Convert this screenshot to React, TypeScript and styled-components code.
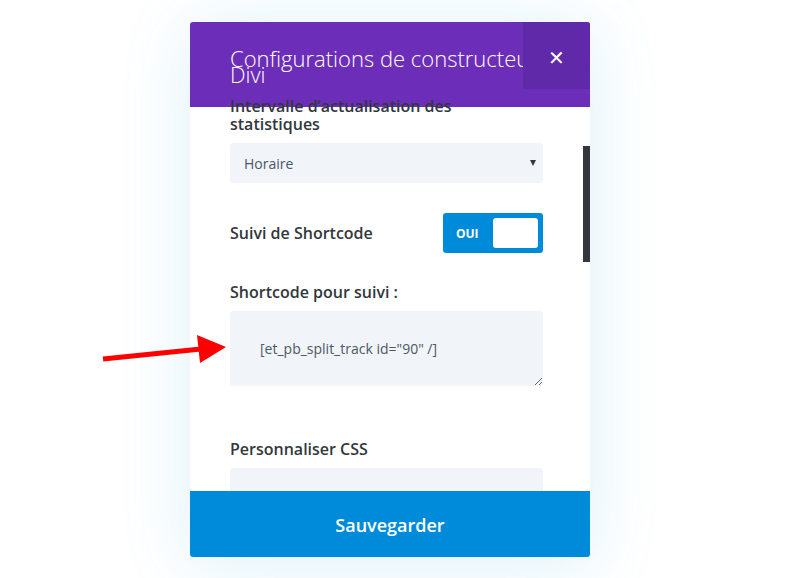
import React from 'react';
import styled, { createGlobalStyle } from 'styled-components';

const GlobalStyle = createGlobalStyle`
  html, body {
    margin: 0;
    padding: 0;
    background: #ffffff;
    font-family: "Open Sans", "Liberation Sans", sans-serif;
  }
`;

const Page = styled.div`
  position: relative;
  width: 786px;
  height: 578px;
  padding: 22px 0 0 190px;
  box-sizing: border-box;
  overflow: hidden;
`;

const Modal = styled.div`
  width: 400px;
  height: 535px;
  display: flex;
  flex-direction: column;
  background: #ffffff;
  border-radius: 3px;
  overflow: hidden;
  position: relative;
  box-shadow: 0 6px 70px rgba(40, 160, 220, 0.16);
`;

const Header = styled.div`
  position: relative;
  flex: 0 0 85px;
  background: #6c2eb9;
  padding: 28px 0 0 40px;
  box-sizing: border-box;
`;

const Title = styled.h2`
  margin: 0;
  width: 330px;
  font-size: 22px;
  font-weight: 300;
  line-height: 16px;
  color: #ffffff;
`;

const CloseButton = styled.button`
  position: absolute;
  top: 0;
  right: 0;
  width: 67px;
  height: 67px;
  border: none;
  background: #5f29a9;
  color: #ffffff;
  font-family: "DejaVu Sans", sans-serif;
  font-size: 20px;
  font-weight: 700;
  line-height: 1;
  padding: 4px 0 0 0;
  cursor: pointer;
`;

const Body = styled.div`
  position: relative;
  z-index: 1;
  flex: 1;
  margin-top: -10px;
  padding: 0 47px 0 40px;
  overflow: hidden;
`;

const Scrollbar = styled.div`
  position: absolute;
  right: 0;
  top: 49px;
  width: 7px;
  height: 116px;
  background: #35353d;
`;

const Field = styled.div<{ $gap?: number }>`
  margin-bottom: ${(p) => p.$gap ?? 30}px;
`;

const Label = styled.div`
  font-size: 16px;
  font-weight: 600;
  line-height: 18px;
  color: #32373c;
  margin-bottom: 10px;
`;

const Select = styled.div`
  position: relative;
  height: 40px;
  display: flex;
  align-items: center;
  padding-left: 14px;
  background: #f1f4f9;
  border-radius: 3px;
  font-size: 14px;
  color: #4c5866;

  &::after {
    content: '';
    position: absolute;
    right: 7px;
    top: 17px;
    border-left: 3px solid transparent;
    border-right: 3px solid transparent;
    border-top: 6px solid #32373c;
  }
`;

const ToggleRow = styled.div`
  display: flex;
  align-items: center;
  justify-content: space-between;
  margin-bottom: 30px;
`;

const RowLabel = styled(Label)`
  margin-bottom: 0;
`;

const Toggle = styled.div`
  width: 100px;
  height: 40px;
  box-sizing: border-box;
  padding: 5px;
  display: flex;
  align-items: center;
  justify-content: space-between;
  background: #008bda;
  border-radius: 3px;
`;

const ToggleText = styled.span`
  padding-left: 8px;
  font-size: 12px;
  font-weight: 700;
  color: #ffffff;
`;

const Knob = styled.span`
  width: 45px;
  height: 30px;
  background: #ffffff;
  border-radius: 3px;
`;

const TextArea = styled.textarea<{ $height: number }>`
  display: block;
  width: 100%;
  height: ${(p) => p.$height}px;
  box-sizing: border-box;
  border: none;
  border-radius: 3px;
  background: #f1f4f9;
  padding: 26px 16px 0 30px;
  font-family: "Open Sans", "Liberation Sans", sans-serif;
  font-size: 14px;
  line-height: 24px;
  color: #4c5866;
  resize: vertical;
  outline: none;
`;

const Footer = styled.button`
  flex: 0 0 66px;
  border: none;
  padding-top: 3px;
  background: #008bda;
  color: #ffffff;
  font-family: "Open Sans", "Liberation Sans", sans-serif;
  font-size: 18px;
  font-weight: 600;
  cursor: pointer;
  position: relative;
  z-index: 2;
`;

const Arrow = styled.svg`
  position: absolute;
  left: 100px;
  top: 330px;
  width: 130px;
  height: 40px;
  z-index: 5;
`;

const App = () => {
  return (
    <>
      <GlobalStyle />
      <Page>
        <Modal>
          <Header>
            <Title>Configurations de constructeur Divi</Title>
            <CloseButton>✕</CloseButton>
          </Header>
          <Body>
            <Scrollbar />
            <Field>
              <Label>Intervalle d’actualisation des statistiques</Label>
              <Select>Horaire</Select>
            </Field>
            <ToggleRow>
              <RowLabel>Suivi de Shortcode</RowLabel>
              <Toggle>
                <ToggleText>OUI</ToggleText>
                <Knob />
              </Toggle>
            </ToggleRow>
            <Field $gap={54}>
              <Label>Shortcode pour suivi :</Label>
              <TextArea $height={75} readOnly value={'[et_pb_split_track id="90" /]'} />
            </Field>
            <Field>
              <Label>Personnaliser CSS</Label>
              <TextArea $height={75} readOnly value="" />
            </Field>
          </Body>
          <Footer>Sauvegarder</Footer>
        </Modal>
        <Arrow viewBox="0 0 130 40">
          <line x1="3" y1="29" x2="101" y2="19" stroke="#ff0000" strokeWidth="5" />
          <polygon points="97,5 126,17 100,33" fill="#ff0000" />
        </Arrow>
      </Page>
    </>
  );
};

export default App;
